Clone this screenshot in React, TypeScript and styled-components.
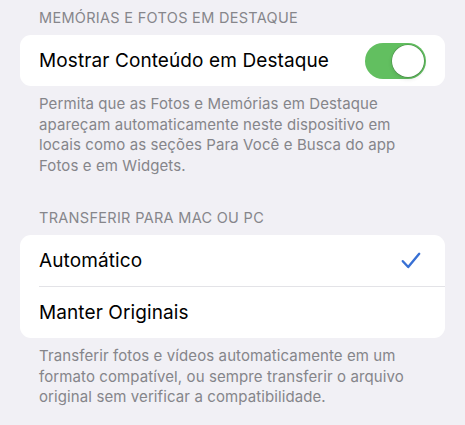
import { createGlobalStyle } from "styled-components";
import styled from "styled-components";

const GlobalStyle = createGlobalStyle`
  html, body {
    margin: 0;
    padding: 0;
    background: #f1f0f5;
  }
  body {
    font-family: Inter, "Noto Sans", "Liberation Sans", sans-serif;
    -webkit-font-smoothing: antialiased;
  }
`;

const Page = styled.div`
  display: flex;
  flex-direction: column;
  padding: 9px 20px 0 20px;
  width: 465px;
  height: 425px;
  box-sizing: border-box;
  overflow: hidden;
`;

const SectionHeader = styled.div<{ $top?: number }>`
  font-size: 14.5px;
  line-height: 18px;
  color: #86868b;
  text-transform: uppercase;
  padding: 0 19px;
  margin-top: ${(p) => p.$top ?? 0}px;
  margin-bottom: 8px;
  letter-spacing: 0.3px;
`;

const Card = styled.div`
  display: flex;
  flex-direction: column;
  background: #ffffff;
  border-radius: 11px;
  overflow: hidden;
`;

const Row = styled.div<{ $divider?: boolean }>`
  display: flex;
  align-items: center;
  justify-content: space-between;
  height: ${(p) => (p.$divider ? 52 : 51)}px;
  margin-left: 19px;
  padding-right: 19px;
  box-sizing: border-box;
  border-bottom: ${(p) => (p.$divider ? "1px solid #e3e3e7" : "none")};
`;

const RowLabel = styled.span`
  font-size: 19px;
  color: #000;
  letter-spacing: 0.1px;
`;

const Footer = styled.div`
  font-size: 15px;
  line-height: 20.5px;
  color: #85858a;
  padding: 0 19px;
  margin-top: 8px;
  letter-spacing: 0.1px;
`;

const Track = styled.div<{ $on: boolean }>`
  display: flex;
  align-items: center;
  justify-content: ${(p) => (p.$on ? "flex-end" : "flex-start")};
  width: 61px;
  height: 36px;
  padding: 2px;
  box-sizing: border-box;
  border-radius: 18px;
  background: ${(p) => (p.$on ? "#62bf60" : "#e5e5ea")};
`;

const Knob = styled.div`
  width: 32px;
  height: 32px;
  border-radius: 50%;
  background: #fff;
  box-shadow: 0 0 0 0.5px rgba(0, 0, 0, 0.25), 0 2px 4px rgba(0, 0, 0, 0.12);
`;

const Check = styled.svg`
  width: 20px;
  height: 17px;
  margin-right: 5px;
`;

function Toggle({ on }: { on: boolean }) {
  return (
    <Track $on={on}>
      <Knob />
    </Track>
  );
}

function CheckMark() {
  return (
    <Check viewBox="0 0 20 17" fill="none">
      <path
        d="M1.8 9.2 L7.2 15 L18.2 1.8"
        stroke="#3870d4"
        strokeWidth="2.4"
        strokeLinecap="round"
        strokeLinejoin="round"
      />
    </Check>
  );
}

export default function App() {
  return (
    <>
      <GlobalStyle />
      <Page>
        <SectionHeader>Memórias e Fotos em Destaque</SectionHeader>
        <Card>
          <Row>
            <RowLabel>Mostrar Conteúdo em Destaque</RowLabel>
            <Toggle on />
          </Row>
        </Card>
        <Footer>
          Permita que as Fotos e Memórias em Destaque
          <br />
          apareçam automaticamente neste dispositivo em
          <br />
          locais como as seções Para Você e Busca do app
          <br />
          Fotos e em Widgets.
        </Footer>

        <SectionHeader $top={33}>Transferir para Mac ou PC</SectionHeader>
        <Card>
          <Row $divider>
            <RowLabel>Automático</RowLabel>
            <CheckMark />
          </Row>
          <Row>
            <RowLabel>Manter Originais</RowLabel>
          </Row>
        </Card>
        <Footer>
          Transferir fotos e vídeos automaticamente em um
          <br />
          formato compatível, ou sempre transferir o arquivo
          <br />
          original sem verificar a compatibilidade.
        </Footer>
      </Page>
    </>
  );
}
